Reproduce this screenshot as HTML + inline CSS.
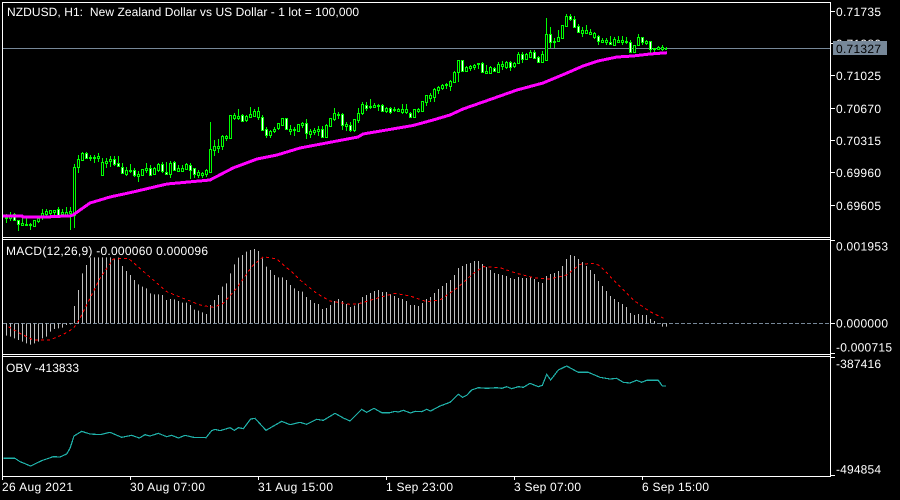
<!DOCTYPE html>
<html><head><meta charset="utf-8"><style>
html,body{margin:0;padding:0;background:#000;width:900px;height:500px;overflow:hidden}
svg{display:block}
text{font-family:"Liberation Sans",sans-serif;font-size:12px;fill:#fff}
</style></head><body>
<svg width="900" height="500" viewBox="0 0 900 500" xmlns="http://www.w3.org/2000/svg" shape-rendering="crispEdges">
<rect width="900" height="500" fill="#000"/>
<!-- price line -->
<path d="M3 48.5H830" stroke="#778899" fill="none"/>
<!-- wicks -->
<path stroke="#00ff00" fill="none" d="M6.5 214V223M10.5 212V221M14.5 213V221M18.5 220V231M22.5 218V226M26.5 218V226M30.5 223V230M34.5 220V227M38.5 217V223M42.5 209V220M46.5 209V217M50.5 210V216M54.5 210V216M58.5 207V217M62.5 209V217M66.5 207V217M70.5 207V230M74.5 164V228M78.5 155V173M82.5 152V161M86.5 152V159M90.5 155V161M94.5 155V163M98.5 153V162M102.5 158V176M106.5 158V168M110.5 156V167M114.5 156V166M118.5 156V167M122.5 163V174M126.5 167V176M130.5 164V173M134.5 168V177M138.5 171V182M142.5 169V176M146.5 163V173M150.5 165V176M154.5 167V175M158.5 163V172M162.5 162V173M166.5 162V175M170.5 161V178M174.5 161V171M178.5 165V172M182.5 165V172M186.5 163V170M190.5 163V179M194.5 168V178M198.5 170V178M202.5 172V178M206.5 169V177M210.5 122V172M214.5 140V156M218.5 139V153M222.5 135V150M226.5 135V141M230.5 115V138M234.5 113V120M238.5 109V120M242.5 114V122M246.5 115V122M250.5 107V117M254.5 109V116M258.5 107V120M262.5 115V131M266.5 127V138M270.5 130V138M274.5 127V133M278.5 123V130M282.5 118V125M286.5 118V129M290.5 125V135M294.5 127V136M298.5 124V131M302.5 122V128M306.5 119V139M310.5 129V138M314.5 128V135M318.5 126V136M322.5 126V137M326.5 124V138M330.5 118V127M334.5 108V121M338.5 112V119M342.5 113V130M346.5 122V131M350.5 122V132M354.5 119V132M358.5 108V123M362.5 102V115M366.5 102V111M370.5 99V109M374.5 103V108M378.5 104V111M382.5 104V112M386.5 107V113M390.5 107V114M394.5 107V112M398.5 108V112M402.5 104V114M406.5 104V114M410.5 112V118M414.5 109V118M418.5 108V113M422.5 101V112M426.5 95V106M430.5 93V102M434.5 88V102M438.5 86V94M442.5 84V90M446.5 83V89M450.5 80V91M454.5 71V83M458.5 60V82M462.5 60V72M466.5 66V72M470.5 65V71M474.5 64V70M478.5 63V69M482.5 62V73M486.5 65V74M490.5 66V74M494.5 67V72M498.5 62V73M502.5 61V70M506.5 61V69M510.5 61V71M514.5 62V68M518.5 52V63M522.5 52V63M526.5 53V60M530.5 50V58M534.5 50V59M538.5 56V63M542.5 51V62M546.5 18V60M550.5 27V48M554.5 38V48M558.5 30V41M562.5 25V38M566.5 14V27M570.5 14V21M574.5 16V27M578.5 24V33M582.5 27V37M586.5 25V33M590.5 29V34M594.5 32V39M598.5 35V45M602.5 38V43M606.5 38V45M610.5 36V45M614.5 37V46M618.5 36V43M622.5 36V45M626.5 37V44M630.5 40V53M634.5 45V52M638.5 34V46M642.5 37V45M646.5 40V45M650.5 41V53M654.5 48V53M658.5 46V50M662.5 45V51M666.5 47V49"/>
<!-- hollow bodies -->
<path stroke="#00ff00" fill="#000" d="M5.5 217.5h2v1h-2zM9.5 216.5h2v2h-2zM21.5 223.5h2v2h-2zM25.5 224.5h2v1h-2zM29.5 224.5h2v1h-2zM33.5 220.5h2v6h-2zM37.5 218.5h2v3h-2zM41.5 213.5h2v4h-2zM45.5 211.5h2v3h-2zM49.5 210.5h2v3h-2zM53.5 210.5h2v2h-2zM61.5 212.5h2v2h-2zM65.5 212.5h2v3h-2zM69.5 211.5h2v2h-2zM73.5 167.5h2v48h-2zM77.5 159.5h2v8h-2zM81.5 153.5h2v7h-2zM89.5 157.5h2v1h-2zM93.5 157.5h2v1h-2zM97.5 156.5h2v2h-2zM101.5 162.5h2v13h-2zM105.5 161.5h2v2h-2zM109.5 159.5h2v2h-2zM125.5 170.5h2v4h-2zM129.5 170.5h2v1h-2zM137.5 174.5h2v2h-2zM141.5 169.5h2v6h-2zM145.5 168.5h2v2h-2zM153.5 168.5h2v6h-2zM157.5 164.5h2v6h-2zM169.5 163.5h2v11h-2zM177.5 168.5h2v3h-2zM181.5 168.5h2v3h-2zM185.5 164.5h2v5h-2zM197.5 172.5h2v3h-2zM201.5 173.5h2v2h-2zM205.5 170.5h2v4h-2zM209.5 149.5h2v23h-2zM213.5 146.5h2v4h-2zM217.5 146.5h2v2h-2zM221.5 136.5h2v10h-2zM225.5 136.5h2v2h-2zM229.5 115.5h2v23h-2zM233.5 115.5h2v3h-2zM237.5 116.5h2v2h-2zM245.5 116.5h2v4h-2zM249.5 114.5h2v3h-2zM253.5 111.5h2v5h-2zM257.5 111.5h2v6h-2zM269.5 131.5h2v4h-2zM273.5 129.5h2v2h-2zM277.5 123.5h2v5h-2zM281.5 118.5h2v7h-2zM289.5 129.5h2v2h-2zM293.5 129.5h2v1h-2zM297.5 124.5h2v7h-2zM301.5 123.5h2v2h-2zM309.5 131.5h2v3h-2zM313.5 130.5h2v2h-2zM317.5 129.5h2v2h-2zM325.5 125.5h2v12h-2zM329.5 118.5h2v8h-2zM333.5 113.5h2v6h-2zM337.5 114.5h2v1h-2zM345.5 124.5h2v2h-2zM353.5 119.5h2v11h-2zM357.5 113.5h2v7h-2zM361.5 104.5h2v9h-2zM369.5 106.5h2v1h-2zM373.5 105.5h2v2h-2zM377.5 105.5h2v1h-2zM385.5 108.5h2v3h-2zM393.5 109.5h2v1h-2zM397.5 109.5h2v2h-2zM401.5 109.5h2v3h-2zM405.5 109.5h2v3h-2zM413.5 109.5h2v8h-2zM417.5 109.5h2v2h-2zM421.5 101.5h2v10h-2zM425.5 95.5h2v7h-2zM429.5 95.5h2v3h-2zM433.5 89.5h2v8h-2zM437.5 87.5h2v3h-2zM441.5 85.5h2v3h-2zM445.5 84.5h2v1h-2zM449.5 81.5h2v5h-2zM453.5 72.5h2v10h-2zM457.5 60.5h2v12h-2zM465.5 67.5h2v4h-2zM469.5 66.5h2v2h-2zM473.5 65.5h2v2h-2zM477.5 63.5h2v1h-2zM485.5 71.5h2v2h-2zM489.5 67.5h2v6h-2zM497.5 64.5h2v8h-2zM501.5 64.5h2v2h-2zM505.5 62.5h2v5h-2zM513.5 63.5h2v3h-2zM517.5 54.5h2v9h-2zM525.5 54.5h2v5h-2zM529.5 52.5h2v5h-2zM541.5 54.5h2v8h-2zM545.5 34.5h2v26h-2zM553.5 41.5h2v1h-2zM557.5 37.5h2v4h-2zM561.5 25.5h2v13h-2zM565.5 16.5h2v10h-2zM581.5 30.5h2v3h-2zM585.5 30.5h2v3h-2zM589.5 32.5h2v2h-2zM593.5 33.5h2v4h-2zM601.5 40.5h2v2h-2zM605.5 40.5h2v2h-2zM613.5 39.5h2v6h-2zM617.5 40.5h2v2h-2zM621.5 40.5h2v2h-2zM625.5 41.5h2v1h-2zM633.5 45.5h2v7h-2zM637.5 37.5h2v8h-2zM645.5 41.5h2v2h-2zM653.5 48.5h2v1h-2zM657.5 47.5h2v2h-2zM661.5 47.5h2v2h-2zM665.5 48.5h1v1h-1z"/>
<!-- filled bodies -->
<path stroke="#00ff00" fill="#fff" d="M13.5 214.5h2v6h-2zM17.5 220.5h2v4h-2zM57.5 209.5h2v6h-2zM85.5 153.5h2v5h-2zM113.5 159.5h2v5h-2zM117.5 163.5h2v3h-2zM121.5 167.5h2v6h-2zM133.5 170.5h2v5h-2zM149.5 168.5h2v7h-2zM161.5 164.5h2v7h-2zM165.5 172.5h2v2h-2zM173.5 162.5h2v8h-2zM189.5 165.5h2v5h-2zM193.5 168.5h2v6h-2zM241.5 115.5h2v6h-2zM261.5 117.5h2v13h-2zM265.5 129.5h2v6h-2zM285.5 118.5h2v11h-2zM305.5 123.5h2v10h-2zM321.5 129.5h2v8h-2zM341.5 114.5h2v11h-2zM349.5 125.5h2v5h-2zM365.5 105.5h2v3h-2zM381.5 105.5h2v6h-2zM389.5 108.5h2v4h-2zM409.5 113.5h2v4h-2zM461.5 60.5h2v11h-2zM481.5 63.5h2v9h-2zM493.5 68.5h2v3h-2zM509.5 62.5h2v5h-2zM521.5 54.5h2v5h-2zM533.5 52.5h2v6h-2zM537.5 57.5h2v5h-2zM549.5 34.5h2v8h-2zM569.5 16.5h2v3h-2zM573.5 19.5h2v8h-2zM577.5 26.5h2v6h-2zM597.5 36.5h2v5h-2zM609.5 42.5h2v2h-2zM629.5 42.5h2v10h-2zM641.5 37.5h2v5h-2zM649.5 41.5h2v8h-2z"/>
<!-- moving average -->
<polyline fill="none" stroke="#ff00ff" stroke-width="3" points="3,216 22,216 23,217 50,217 51,216.5 70,216 73,215 90,203 110,197 133,192 167,184 210,180 233,168 257,159 277,155 300,148 358,137 363,134 413,125.5 433,120 450,115 463,109 483,102 517,90 543,83 567,73 583,66 598,61 617,57 633,56 650,54 667,52.7"/>

<!-- MACD zero line -->
<path d="M3 323.5H830" stroke="#778899" stroke-dasharray="4 2" fill="none"/>
<!-- MACD histogram -->
<g transform="translate(0,235) scale(1,0.33333)">
<path stroke="#c0c0c0" fill="none" d="M6.5 265V302M10.5 265V305M14.5 265V310M18.5 265V315M22.5 265V320M26.5 265V325M30.5 265V329M34.5 265V325M38.5 265V320M42.5 265V310M46.5 265V305M50.5 265V290M54.5 265V282M58.5 265V280M62.5 265V278M66.5 265V270M70.5 265V268M74.5 265V213M78.5 265V165M82.5 265V115M86.5 265V90M90.5 265V67M94.5 265V67M98.5 265V67M102.5 265V67M106.5 265V67M110.5 265V67M114.5 265V70M118.5 265V68M122.5 265V93M126.5 265V108M130.5 265V120M134.5 265V135M138.5 265V148M142.5 265V155M146.5 265V160M150.5 265V175M154.5 265V178M158.5 265V178M162.5 265V180M166.5 265V195M170.5 265V192M174.5 265V193M178.5 265V198M182.5 265V203M186.5 265V203M190.5 265V210M194.5 265V224M198.5 265V227M202.5 265V232M206.5 265V237M210.5 265V210M214.5 265V195M218.5 265V180M222.5 265V155M226.5 265V145M230.5 265V115M234.5 265V88M238.5 265V68M242.5 265V60M246.5 265V50M250.5 265V45M254.5 265V42M258.5 265V48M262.5 265V70M266.5 265V95M270.5 265V105M274.5 265V120M278.5 265V127M282.5 265V127M286.5 265V135M290.5 265V150M294.5 265V160M298.5 265V168M302.5 265V170M306.5 265V186M310.5 265V195M314.5 265V204M318.5 265V207M322.5 265V222M326.5 265V219M330.5 265V210M334.5 265V198M338.5 265V192M342.5 265V198M346.5 265V207M350.5 265V216M354.5 265V212M358.5 265V205M362.5 265V186M366.5 265V180M370.5 265V174M374.5 265V168M378.5 265V165M382.5 265V171M386.5 265V171M390.5 265V177M394.5 265V183M398.5 265V189M402.5 265V192M406.5 265V198M410.5 265V210M414.5 265V210M418.5 265V213M422.5 265V204M426.5 265V192M430.5 265V186M434.5 265V174M438.5 265V162M442.5 265V153M446.5 265V144M450.5 265V135M454.5 265V120M458.5 265V99M462.5 265V93M466.5 265V87M470.5 265V84M474.5 265V78M478.5 265V78M482.5 265V87M486.5 265V96M490.5 265V105M494.5 265V114M498.5 265V117M502.5 265V120M506.5 265V123M510.5 265V129M514.5 265V132M518.5 265V126M522.5 265V129M526.5 265V129M530.5 265V126M534.5 265V132M538.5 265V141M542.5 265V144M546.5 265V123M550.5 265V117M554.5 265V114M558.5 265V108M562.5 265V93M566.5 265V72M570.5 265V60M574.5 265V63M578.5 265V72M582.5 265V81M586.5 265V93M590.5 265V105M594.5 265V117M598.5 265V138M602.5 265V153M606.5 265V168M610.5 265V183M614.5 265V192M618.5 265V201M622.5 265V207M626.5 265V216M630.5 265V234M634.5 265V240M638.5 265V237M642.5 265V240M646.5 265V240M650.5 265V252M654.5 265V258M662.5 265V275M666.5 265V275"/>
</g>
<!-- MACD signal -->
<g transform="translate(0,235) scale(0.33333)">
<polyline fill="none" stroke="#ff0000" stroke-width="3" stroke-dasharray="9 9" points="25,275 60,295 100,315 150,315 190,298 220,280 240,250 270,190 300,130 340,72 385,70 420,100 460,135 500,170 550,190 600,210 640,217 670,205 710,160 755,95 790,65 830,72 880,115 900,135 950,175 990,198 1050,208 1080,205 1140,187 1185,175 1230,183 1280,200 1320,195 1370,160 1420,115 1450,95 1500,98 1550,115 1600,128 1650,132 1700,120 1740,88 1780,85 1800,92 1850,145 1900,195 1950,230 1995,252"/>
</g>
<!-- OBV -->
<g transform="translate(0,350) scale(0.33333)">
<polyline fill="none" stroke="#20b2aa" stroke-width="3.6" points="10,325 45,325 60,335 92,348 125,332 160,320 180,321 200,312 210,295 222,258 245,244 270,252 300,254 330,247 365,262 395,256 418,264 435,254 450,258 475,250 500,260 515,256 535,264 555,256 580,262 618,263 635,242 645,238 660,242 690,233 703,241 715,233 730,236 752,207 765,205 798,241 845,214 870,224 900,217 920,223 950,208 970,211 1005,190 1030,204 1050,213 1085,178 1100,187 1122,175 1145,188 1170,188 1185,184 1195,186 1210,181 1232,189 1245,184 1265,185 1280,178 1292,183 1320,168 1350,157 1375,133 1388,142 1400,136 1415,120 1435,113 1460,115 1490,113 1505,115 1520,110 1535,116 1555,110 1570,112 1590,100 1615,110 1627,106 1640,73 1652,90 1675,60 1700,48 1735,67 1765,67 1800,82 1830,87 1850,85 1870,97 1890,99 1910,91 1925,97 1940,91 1975,91 1987,108 1998,108"/>
</g>

<!-- frames -->
<path stroke="#fff" fill="none" d="M2.5 2.5H830.5V476.5H2.5ZM2.5 237.5H830.5M2.5 239.5H830.5M2.5 354.5H830.5M2.5 356.5H830.5"/>
<!-- axis ticks -->
<path stroke="#fff" fill="none" d="M831 11.5H835M831 43.5H835M831 75.5H835M831 108.5H835M831 140.5H835M831 172.5H835M831 205.5H835M831 240.5H835M831 323.5H835M831 353.5H835M831 357.5H835M831 475.5H835M130.5 477V480M258.5 477V480M386.5 477V480M514.5 477V480M642.5 477V480M2.5 477V480"/>

<!-- text -->
<g shape-rendering="auto" text-rendering="geometricPrecision">
<text x="7" y="16" textLength="352" lengthAdjust="spacing" xml:space="preserve">NZDUSD, H1:  New Zealand Dollar vs US Dollar - 1 lot = 100,000</text>
<text x="6" y="255" textLength="202" lengthAdjust="spacing">MACD(12,26,9) -0.000060 0.000096</text>
<text x="6" y="372" textLength="73" lengthAdjust="spacing">OBV -413833</text>

<text x="836" y="16" textLength="45" lengthAdjust="spacing">0.71735</text>
<text x="836" y="48" textLength="45" lengthAdjust="spacing">0.71380</text>
<rect x="833" y="41" width="54" height="14" fill="#778899" shape-rendering="crispEdges"/>
<text x="836" y="53" textLength="45" lengthAdjust="spacing" style="fill:#000">0.71327</text>
<text x="836" y="80" textLength="45" lengthAdjust="spacing">0.71025</text>
<text x="836" y="113" textLength="45" lengthAdjust="spacing">0.70670</text>
<text x="836" y="145" textLength="45" lengthAdjust="spacing">0.70315</text>
<text x="836" y="177" textLength="45" lengthAdjust="spacing">0.69960</text>
<text x="836" y="210" textLength="45" lengthAdjust="spacing">0.69605</text>

<text x="836" y="250.5" textLength="52" lengthAdjust="spacing">0.001953</text>
<text x="836" y="327.5" textLength="52" lengthAdjust="spacing">0.000000</text>
<text x="836" y="351.5" textLength="56" lengthAdjust="spacing">-0.000715</text>
<text x="836" y="368" textLength="45" lengthAdjust="spacing">-387416</text>
<text x="836" y="473.5" textLength="45" lengthAdjust="spacing">-494854</text>

<text x="2" y="491" textLength="71" lengthAdjust="spacing">26 Aug 2021</text>
<text x="130" y="491" textLength="75" lengthAdjust="spacing">30 Aug 07:00</text>
<text x="258" y="491" textLength="75" lengthAdjust="spacing">31 Aug 15:00</text>
<text x="386" y="491" textLength="67" lengthAdjust="spacing">1 Sep 23:00</text>
<text x="514" y="491" textLength="67" lengthAdjust="spacing">3 Sep 07:00</text>
<text x="642" y="491" textLength="67" lengthAdjust="spacing">6 Sep 15:00</text>
</g>
</svg>
</body></html>
